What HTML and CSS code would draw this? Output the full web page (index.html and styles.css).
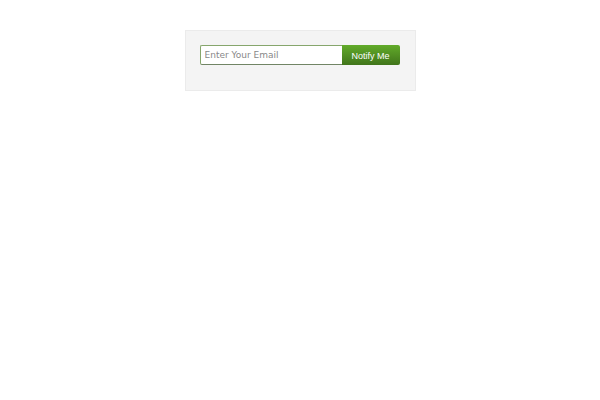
FILE: index.html
```html
<!DOCTYPE html>
<html lang="en">
<head>
    <meta charset="utf-8">
    <meta name="viewport" content="width=device-width, initial-scale=1.0">
    <title>Notify Me</title>
    <link rel="stylesheet" href="styles.css">
</head>
<body>
    <form class="notify-form">
        <input class="notify-email" type="email" name="email" placeholder="Enter Your Email" aria-label="Enter Your Email">
        <button class="notify-button" type="submit">Notify Me</button>
    </form>
</body>
</html>
```

FILE: styles.css
```css
body {
    margin: 0;
    padding: 30px 16px;
    background: #fff;
}
.notify-form {
    display: flex;
    box-sizing: border-box;
    max-width: 231px;
    margin: 0 auto;
    padding: 14px 15px 25px 14px;
    background: #f4f4f4;
    border: 1px solid #ebebeb;
}
.notify-email {
    box-sizing: border-box;
    flex: 1;
    min-width: 0;
    height: 20px;
    margin: 0;
    padding: 0 4px;
    border: 1px solid #86a66c;
    border-bottom-color: #718565;
    border-right: 0;
    border-radius: 2px 0 0 2px;
    background: #fff;
    color: #444;
    font: 9px "DejaVu Sans", sans-serif;
}
.notify-email::placeholder {
    color: #888;
    opacity: 1;
}
.notify-button {
    box-sizing: border-box;
    width: 58px;
    height: 20px;
    margin: 0;
    padding: 2px 0 0;
    border: 0;
    border-radius: 0 2px 2px 0;
    background: linear-gradient(#62ab2a, #41751b);
    color: #fff;
    font: 9px "Liberation Sans", Arial, sans-serif;
    cursor: pointer;
}
```
